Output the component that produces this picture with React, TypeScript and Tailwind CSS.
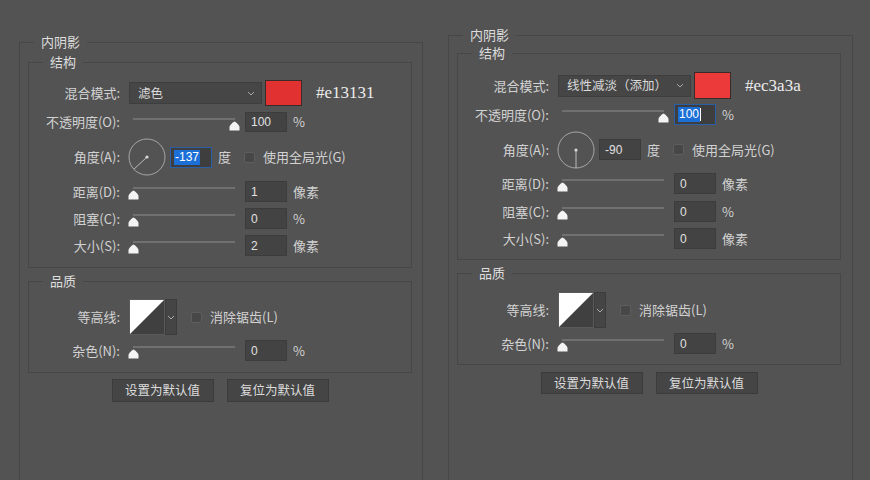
import React from "react";

const CJK = '"Noto Sans CJK SC", "Noto Sans", sans-serif';
const SANS = '"Liberation Sans", "Noto Sans CJK SC", sans-serif';

function Thumb({ full }: { full: boolean }) {
  return (
    <svg
      width="11"
      height="10"
      viewBox="0 0 11 10"
      className={`absolute top-[9px] ${full ? "left-[100px]" : "left-[-1px]"}`}
    >
      <path d="M5.5 0.6 C6.5 0.6 10.5 4.6 10.5 6 V9.5 H0.5 V6 C0.5 4.6 4.5 0.6 5.5 0.6 Z" fill="#f4f4f4" />
    </svg>
  );
}

function Slider({ full = false }: { full?: boolean }) {
  return (
    <div className="relative w-[111px] self-stretch ml-[9px]">
      <div className="absolute left-[4px] top-[6px] w-[102px] h-[2px] bg-[#707070]" />
      <Thumb full={full} />
    </div>
  );
}

function NumBox({ value, selected = false, caret = false }: { value: string; selected?: boolean; caret?: boolean }) {
  return (
    <div
      className={`w-[42px] self-stretch flex items-center pl-[3px] text-[12px] text-[#e0e0e0] border ${
        selected ? "border-[#2b5fa5] bg-[#3e3e3e]" : "border-[#3c3c3c] bg-[#434343]"
      }`}
      style={{ fontFamily: SANS }}
    >
      {selected ? (
        <span className="bg-[#1b6fd6] text-white px-[1px] leading-[15px]">{value}</span>
      ) : (
        <span className="pl-[2px]">{value}</span>
      )}
      {caret && <span className="w-[1px] h-[13px] bg-white" />}
    </div>
  );
}

function Label({ children }: { children: React.ReactNode }) {
  return <div className="w-[91px] shrink-0 text-right text-[13px] text-[#d2d2d2] whitespace-nowrap">{children}</div>;
}

function Unit({ children }: { children: React.ReactNode }) {
  return <div className="ml-[6px] text-[13px] text-[#d2d2d2]">{children}</div>;
}

function Check({ label, ml }: { label: string; ml: string }) {
  return (
    <div className={`flex items-center ${ml}`}>
      <div className="w-[11px] h-[11px] rounded-[2px] border border-[#5e5e5e] bg-[#474747]" />
      <div className="ml-[8px] text-[13px] text-[#d2d2d2] whitespace-nowrap">{label}</div>
    </div>
  );
}

function Chevron() {
  return (
    <svg width="8" height="5" viewBox="0 0 8 5">
      <path d="M1 1 L4 4 L7 1" stroke="#a9a9a9" strokeWidth="1" fill="none" />
    </svg>
  );
}

function Dial({ deg }: { deg: number }) {
  const r = (deg * Math.PI) / 180;
  const x = 19 + Math.cos(r) * 18;
  const y = 19 - Math.sin(r) * 18;
  return (
    <svg width="38" height="38" viewBox="0 0 38 38" className="ml-[8px]">
      <circle cx="19" cy="19" r="18" fill="none" stroke="#a6a6a6" strokeWidth="1" />
      <line x1="19" y1="19" x2={x} y2={y} stroke="#bdbdbd" strokeWidth="1" />
      <circle cx="19" cy="19" r="1.6" fill="#d8d8d8" />
    </svg>
  );
}

function Contour() {
  return (
    <div className="flex self-stretch ml-[9px]">
      <svg width="36" height="36" viewBox="0 0 36 36">
        <rect x="0" y="0" width="36" height="36" fill="#404040" />
        <polygon points="0,0 36,0 0,36" fill="#ffffff" />
        <rect x="0.5" y="0.5" width="35" height="35" fill="none" stroke="#5a5a5a" />
      </svg>
      <div className="w-[12px] bg-[#454545] border border-[#3c3c3c] flex items-center justify-center">
        <Chevron />
      </div>
    </div>
  );
}

type Cfg = {
  wrap: string;
  innerMt: string;
  sPad: string;
  blendH: string;
  opRow: string;
  angRow: string;
  dRow: string;
  cRow: string;
  szRow: string;
  qMt: string;
  qPad: string;
  conH: string;
  noiseRow: string;
  btnRow: string;
  btnH: string;
  selText: string;
  swatch: string;
  hex: string;
  angle: number;
  angleVal: string;
  angleSel: boolean;
  opSel: boolean;
  dist: string;
  size: string;
};

function Panel({ c }: { c: Cfg }) {
  return (
    <div className={c.wrap}>
      <fieldset className="border border-[#474747] h-[470px]">
        <legend className="ml-[14px] px-[7px] text-[13px] leading-[18px] text-[#dedede]">内阴影</legend>
        <fieldset className={`ml-[8px] w-[384px] border border-[#474747] ${c.innerMt} ${c.sPad}`}>
          <legend className="ml-[14px] px-[7px] text-[13px] leading-[18px] text-[#dedede]">结构</legend>
          <div className={`flex items-center ${c.blendH}`}>
            <Label>混合模式:</Label>
            <div className="ml-[9px] w-[133px] h-[22px] bg-[#464646] border border-[#3e3e3e] flex items-center justify-between pl-[8px] pr-[6px]">
              <span className="text-[12.5px] text-[#dadada] whitespace-nowrap">{c.selText}</span>
              <Chevron />
            </div>
            <div className="ml-[3px] w-[37px] self-stretch border border-[#3a2a2a]" style={{ backgroundColor: c.swatch }} />
            <div className="ml-[14px] text-[17px] text-[#ececec]" style={{ fontFamily: '"Liberation Serif", serif' }}>
              {c.hex}
            </div>
          </div>
          <div className={`flex items-center ${c.opRow}`}>
            <Label>不透明度(O):</Label>
            <Slider full />
            <div className="ml-[5px] flex self-stretch">
              <NumBox value="100" selected={c.opSel} caret={c.opSel} />
            </div>
            <Unit>%</Unit>
          </div>
          <div className={`flex items-center ${c.angRow}`}>
            <Label>角度(A):</Label>
            <Dial deg={c.angle} />
            <div className="ml-[4px] flex h-[21px]">
              <NumBox value={c.angleVal} selected={c.angleSel} />
            </div>
            <Unit>度</Unit>
            <Check label="使用全局光(G)" ml="ml-[13px]" />
          </div>
          <div className={`flex items-center ${c.dRow}`}>
            <Label>距离(D):</Label>
            <Slider />
            <div className="ml-[5px] flex self-stretch">
              <NumBox value={c.dist} />
            </div>
            <Unit>像素</Unit>
          </div>
          <div className={`flex items-center ${c.cRow}`}>
            <Label>阻塞(C):</Label>
            <Slider />
            <div className="ml-[5px] flex self-stretch">
              <NumBox value="0" />
            </div>
            <Unit>%</Unit>
          </div>
          <div className={`flex items-center ${c.szRow}`}>
            <Label>大小(S):</Label>
            <Slider />
            <div className="ml-[5px] flex self-stretch">
              <NumBox value={c.size} />
            </div>
            <Unit>像素</Unit>
          </div>
        </fieldset>
        <fieldset className={`ml-[8px] w-[384px] border border-[#474747] ${c.qMt} ${c.qPad}`}>
          <legend className="ml-[14px] px-[7px] text-[13px] leading-[18px] text-[#dedede]">品质</legend>
          <div className={`flex items-center ${c.conH}`}>
            <Label>等高线:</Label>
            <Contour />
            <Check label="消除锯齿(L)" ml="ml-[14px]" />
          </div>
          <div className={`flex items-center ${c.noiseRow}`}>
            <Label>杂色(N):</Label>
            <Slider />
            <div className="ml-[5px] flex self-stretch">
              <NumBox value="0" />
            </div>
            <Unit>%</Unit>
          </div>
        </fieldset>
        <div className={`ml-[8px] w-[384px] flex justify-center gap-[13px] ${c.btnRow}`}>
          <div className={`w-[102px] ${c.btnH} bg-[#454545] border border-[#3b3b3b] flex items-center justify-center text-[12.5px] text-[#dcdcdc]`}>
            设置为默认值
          </div>
          <div className={`w-[102px] ${c.btnH} bg-[#454545] border border-[#3b3b3b] flex items-center justify-center text-[12.5px] text-[#dcdcdc]`}>
            复位为默认值
          </div>
        </div>
      </fieldset>
    </div>
  );
}

const left: Cfg = {
  wrap: "ml-[19px] mt-[33px] w-[404px] shrink-0",
  innerMt: "mt-[2px]",
  sPad: "pt-[9px] pb-[11px]",
  blendH: "h-[26px]",
  opRow: "h-[20px] mt-[6px]",
  angRow: "h-[38px] mt-[6px]",
  dRow: "h-[21px] mt-[5px]",
  cRow: "h-[21px] mt-[6px]",
  szRow: "h-[21px] mt-[6px]",
  qMt: "mt-[4px]",
  qPad: "pt-[9px] pb-[11px]",
  conH: "h-[36px]",
  noiseRow: "h-[21px] mt-[5px]",
  btnRow: "mt-[6px]",
  btnH: "h-[23px]",
  selText: "滤色",
  swatch: "#e13131",
  hex: "#e13131",
  angle: -137,
  angleVal: "-137",
  angleSel: true,
  opSel: false,
  dist: "1",
  size: "2",
};

const right: Cfg = {
  wrap: "ml-[25px] mt-[26px] w-[405px] shrink-0",
  innerMt: "mt-[0px]",
  sPad: "pt-[10px] pb-[10px]",
  blendH: "h-[27px]",
  opRow: "h-[21px] mt-[5px]",
  angRow: "h-[37px] mt-[6px]",
  dRow: "h-[21px] mt-[5px]",
  cRow: "h-[21px] mt-[7px]",
  szRow: "h-[21px] mt-[6px]",
  qMt: "mt-[4px]",
  qPad: "pt-[10px] pb-[10px]",
  conH: "h-[36px]",
  noiseRow: "h-[21px] mt-[5px]",
  btnRow: "mt-[7px]",
  btnH: "h-[22px]",
  selText: "线性减淡（添加）",
  swatch: "#ec3a3a",
  hex: "#ec3a3a",
  angle: -90,
  angleVal: "-90",
  angleSel: false,
  opSel: true,
  dist: "0",
  size: "0",
};

export default function App() {
  return (
    <div className="w-[870px] h-[480px] bg-[#535353] overflow-hidden flex items-start" style={{ fontFamily: CJK }}>
      <Panel c={left} />
      <Panel c={right} />
    </div>
  );
}
